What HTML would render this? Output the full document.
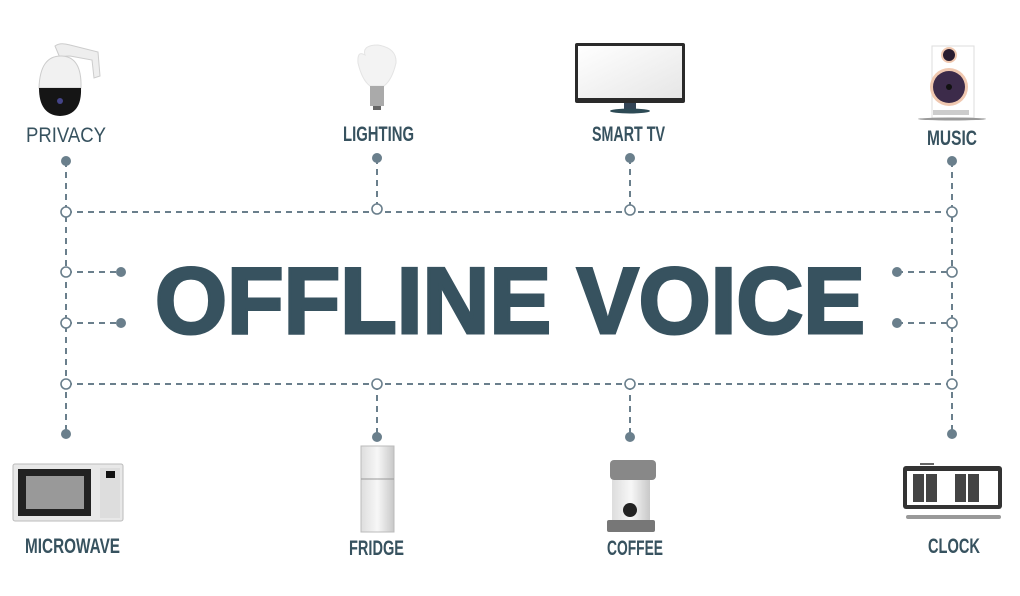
<!DOCTYPE html>
<html><head><meta charset="utf-8"><style>
html,body{margin:0;padding:0;background:#fff;}
svg{display:block}
</style></head><body>
<svg width="1020" height="596" viewBox="0 0 1020 596" xmlns="http://www.w3.org/2000/svg">
<defs>
<linearGradient id="scr" x1="0" y1="0" x2="1" y2="1"><stop offset="0" stop-color="#fff"/><stop offset="1" stop-color="#e6e6e6"/></linearGradient>
<linearGradient id="met" x1="0" y1="0" x2="1" y2="0"><stop offset="0" stop-color="#ddd"/><stop offset=".5" stop-color="#f7f7f7"/><stop offset="1" stop-color="#c8c8c8"/></linearGradient>
</defs>
<g stroke="#6a7f8c" stroke-width="2" fill="none" stroke-dasharray="6 5">
<line x1="66" y1="212" x2="952" y2="212"/>
<line x1="66" y1="384" x2="952" y2="384"/>
<line x1="66" y1="161" x2="66" y2="434"/>
<line x1="952" y1="161" x2="952" y2="434"/>
<line x1="377" y1="158" x2="377" y2="209"/>
<line x1="630" y1="158" x2="630" y2="210"/>
<line x1="377" y1="384" x2="377" y2="437"/>
<line x1="630" y1="384" x2="630" y2="437"/>
<line x1="66" y1="272" x2="121" y2="272"/>
<line x1="66" y1="323" x2="121" y2="323"/>
<line x1="897" y1="272" x2="952" y2="272"/>
<line x1="897" y1="323" x2="952" y2="323"/>
</g>
<g fill="#6a7f8c">
<circle cx="66" cy="161" r="5"/><circle cx="377" cy="158" r="5"/><circle cx="630" cy="158" r="5"/><circle cx="952" cy="161" r="5"/>
<circle cx="66" cy="434" r="5"/><circle cx="377" cy="437" r="5"/><circle cx="630" cy="437" r="5"/><circle cx="952" cy="434" r="5"/>
<circle cx="121" cy="272" r="5"/><circle cx="121" cy="323" r="5"/><circle cx="897" cy="272" r="5"/><circle cx="897" cy="323" r="5"/>
</g>
<g fill="#fff" stroke="#6a7f8c" stroke-width="1.6">
<circle cx="66" cy="212" r="5"/><circle cx="377" cy="209" r="5"/><circle cx="630" cy="210" r="5"/><circle cx="952" cy="212" r="5"/>
<circle cx="66" cy="384" r="5"/><circle cx="377" cy="384" r="5"/><circle cx="630" cy="384" r="5"/><circle cx="952" cy="384" r="5"/>
<circle cx="66" cy="272" r="5"/><circle cx="66" cy="323" r="5"/><circle cx="952" cy="272" r="5"/><circle cx="952" cy="323" r="5"/>
</g>
<text x="155" y="333" textLength="710" lengthAdjust="spacingAndGlyphs" font-family="Liberation Sans, sans-serif" font-weight="bold" font-size="94" fill="#37525f" stroke="#37525f" stroke-width="3">OFFLINE VOICE</text>
<g font-family="Liberation Sans, sans-serif" font-size="21" fill="#37525f" lengthAdjust="spacingAndGlyphs">
<text x="26" y="142" textLength="80" lengthAdjust="spacingAndGlyphs">PRIVACY</text>
<text x="343" y="141" textLength="71" lengthAdjust="spacingAndGlyphs" font-weight="bold">LIGHTING</text>
<text x="592" y="141" textLength="73" lengthAdjust="spacingAndGlyphs" font-weight="bold">SMART TV</text>
<text x="927" y="145" textLength="50" lengthAdjust="spacingAndGlyphs" font-weight="bold">MUSIC</text>
<text x="25" y="553" textLength="95" lengthAdjust="spacingAndGlyphs" font-weight="bold">MICROWAVE</text>
<text x="349" y="555" textLength="55" lengthAdjust="spacingAndGlyphs" font-weight="bold">FRIDGE</text>
<text x="607" y="555" textLength="56" lengthAdjust="spacingAndGlyphs" font-weight="bold">COFFEE</text>
<text x="928" y="553" textLength="52" lengthAdjust="spacingAndGlyphs" font-weight="bold">CLOCK</text>
</g>
<!-- camera -->
<path d="M55 46 Q60 42 70 45 L98 52 L100 76 L94 78 L92 60 L70 56 Q62 56 60 58 Z" fill="#eee" stroke="#ccc"/>
<path d="M39 88 Q40 55 62 56 Q82 57 81 88 Z" fill="#f1f1f1" stroke="#ccc"/>
<path d="M39 88 L81 88 Q82 115 60 116 Q39 115 39 88 Z" fill="#151515"/>
<circle cx="60" cy="101" r="3" fill="#448"/>
<!-- bulb -->
<path d="M365 55 Q357 50 358 63 Q362 80 370 86 L384 86 Q392 80 396 63 Q397 48 378 45 Q362 45 365 55Z" fill="#f3f3f3" stroke="#e4e4e4"/>
<rect x="370" y="86" width="14" height="20" fill="#aaa"/>
<rect x="373" y="106" width="8" height="4" fill="#666"/>
<!-- tv -->
<rect x="575" y="43" width="110" height="60" rx="2" fill="#2a2a2a"/>
<rect x="578" y="46" width="104" height="52" fill="url(#scr)"/>
<rect x="624" y="103" width="12" height="7" fill="#345"/>
<ellipse cx="630" cy="111" rx="20" ry="2.5" fill="#2d4a55"/>
<!-- speaker -->
<rect x="932" y="46" width="42" height="72" fill="#fff" stroke="#ddd"/>
<circle cx="949" cy="55" r="8" fill="#f0c8b0"/><circle cx="949" cy="55" r="6" fill="#2a1d30"/>
<circle cx="949" cy="87" r="19" fill="#f0c8b0"/><circle cx="949" cy="87" r="16" fill="#3c2b4a"/><circle cx="949" cy="87" r="3" fill="#111"/>
<rect x="933" y="110" width="36" height="5" fill="#ccc"/>
<ellipse cx="952" cy="119" rx="34" ry="1.5" fill="#999"/>
<!-- microwave -->
<rect x="13" y="464" width="110" height="57" rx="2" fill="#e8e8e8" stroke="#bbb"/>
<rect x="18" y="469" width="73" height="47" fill="#222"/>
<rect x="26" y="476" width="58" height="33" fill="#999"/>
<rect x="100" y="468" width="20" height="50" fill="#ddd"/>
<rect x="106" y="471" width="9" height="7" fill="#111"/>
<!-- fridge -->
<rect x="361" y="446" width="33" height="86" fill="url(#met)" stroke="#bbb"/>
<line x1="361" y1="479" x2="394" y2="479" stroke="#999"/>
<!-- coffee -->
<rect x="610" y="460" width="46" height="20" rx="4" fill="#888"/>
<rect x="612" y="480" width="38" height="40" fill="url(#met)"/>
<circle cx="630" cy="510" r="7" fill="#222"/>
<rect x="607" y="520" width="48" height="12" rx="2" fill="#777"/>
<!-- clock -->
<rect x="903" y="466" width="99" height="43" rx="3" fill="#333"/>
<rect x="907" y="471" width="91" height="34" fill="#fff"/>
<g fill="#444"><rect x="913" y="474" width="11" height="28"/><rect x="926" y="474" width="11" height="28"/><rect x="955" y="474" width="11" height="28"/><rect x="968" y="474" width="11" height="28"/></g>
<rect x="906" y="515" width="95" height="4" rx="2" fill="#999"/>
<rect x="920" y="463" width="14" height="2" fill="#666"/>
</svg>
</body></html>
